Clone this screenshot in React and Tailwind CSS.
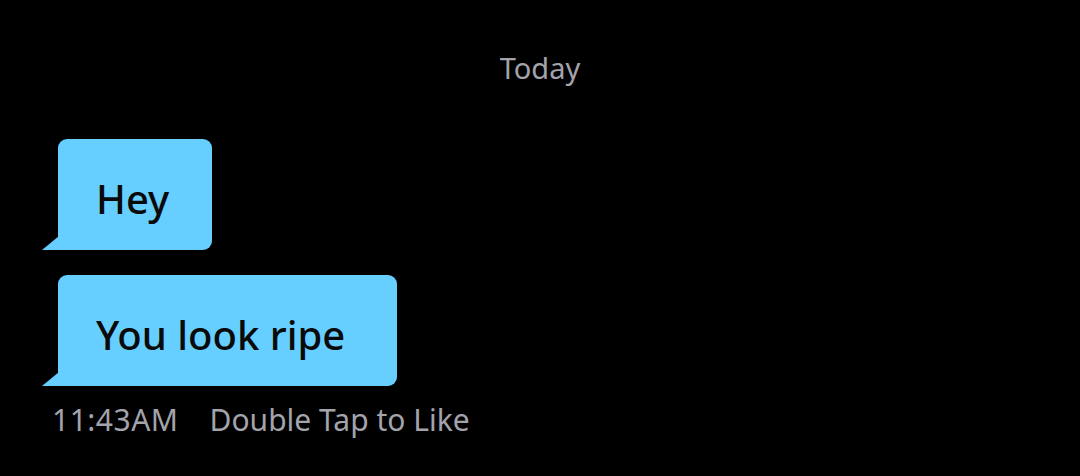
import React from "react";

const Bubble = ({ children, width }) => (
  <div className={`relative ml-[58px] self-start ${width}`}>
    <div className="rounded-[9px] rounded-bl-none bg-[#66cfff] h-[111px] pl-[38px] pt-[8px] flex items-center text-[40px] font-medium text-[#0a0a0a]">
      {children}
    </div>
    {/* tail */}
    <svg
      className="absolute bottom-0 left-[-16px]"
      width="17"
      height="14"
      viewBox="0 0 17 14"
    >
      <path d="M17 0 L17 14 L0 14 Z" fill="#66cfff" />
    </svg>
  </div>
);

export default function App() {
  return (
    <div
      className="w-[1080px] h-[476px] bg-black flex flex-col"
      style={{ fontFamily: '"Noto Sans", "Open Sans", sans-serif' }}
    >
      <div className="pt-[50px] text-center text-[29px] text-[#a3a3ab] leading-[36px]">
        Today
      </div>

      <div className="mt-[53px] flex flex-col gap-[25px]">
        <Bubble width="w-[154px]">Hey</Bubble>
        <Bubble width="w-[339px]">You look ripe</Bubble>
      </div>

      <div className="mt-[14px] ml-[52px] flex items-center gap-[31px] text-[30px] text-[#a3a3ab] leading-[40px]">
        <span className="tracking-[0.5px]">11:43AM</span>
        <span>Double Tap to Like</span>
      </div>
    </div>
  );
}
